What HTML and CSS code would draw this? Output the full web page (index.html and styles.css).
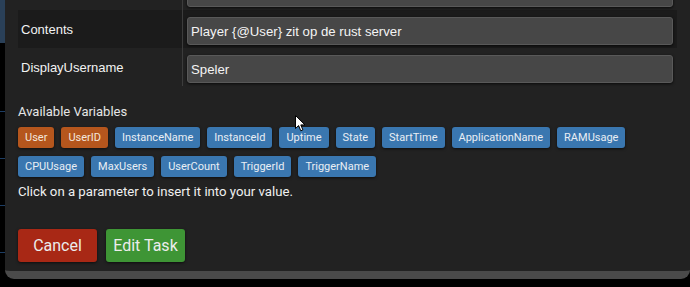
FILE: index.html
```html
<!DOCTYPE html>
<html lang="en">
<head>
  <meta charset="UTF-8">
  <title>Edit Task</title>
  <meta name="viewport" content="width=device-width, initial-scale=1.0">
  <link rel="stylesheet" href="styles.css">
</head>
<body>

<div class="screen">
  <div class="page-edge">
    <div class="edge-tab"></div>
    <div class="edge-line first"></div>
    <div class="edge-line"></div>
    <div class="edge-line"></div>
    <div class="edge-line"></div>
  </div>

  <div class="modal">
    <div class="fields">
      <!-- row scrolled mostly out of view -->
      <div class="field-row">
        <div class="field-label"></div>
        <div class="field-value"><div class="field-input"></div></div>
      </div>
      <div class="field-row active">
        <div class="field-label">Contents</div>
        <div class="field-value"><div class="field-input">Player {@User} zit op de rust server</div></div>
      </div>
      <div class="field-row">
        <div class="field-label">DisplayUsername</div>
        <div class="field-value"><div class="field-input">Speler</div></div>
      </div>
    </div>

    <div class="variables">
      <div class="variables-title">Available Variables</div>
      <div class="chips">
        <span class="chip chip-user">User</span>
        <span class="chip chip-user">UserID</span>
        <span class="chip">InstanceName</span>
        <span class="chip">InstanceId</span>
        <span class="chip">Uptime</span>
        <span class="chip">State</span>
        <span class="chip">StartTime</span>
        <span class="chip">ApplicationName</span>
        <span class="chip">RAMUsage</span>
        <span class="chip">CPUUsage</span>
        <span class="chip">MaxUsers</span>
        <span class="chip">UserCount</span>
        <span class="chip">TriggerId</span>
        <span class="chip">TriggerName</span>
      </div>
      <p class="hint">Click on a parameter to insert it into your value.</p>
    </div>

    <div class="actions">
      <button class="btn btn-cancel">Cancel</button>
      <button class="btn btn-edit">Edit Task</button>
    </div>
  </div>
</div>

<!-- mouse pointer -->
<svg class="cursor" width="11" height="17" viewBox="0 0 11 17">
  <path d="M0.5 0.5 L0.5 13.5 L3.6 10.6 L5.8 15.8 L7.9 14.9 L5.8 9.9 L10 9.9 Z" fill="#fff" stroke="#000" stroke-width="1"/>
</svg>

</body>
</html>
```

FILE: styles.css
```css
* {
  box-sizing: border-box;
}

body {
  margin: 0;
  background: #000;
  overflow: hidden;
  font-family: Roboto, "Liberation Sans", sans-serif;
  color: #eee;
}

.screen {
  display: flex;
  height: 287px;
  align-items: flex-start;
}

/* page behind the dialog */
.page-edge {
  width: 5px;
  flex-shrink: 0;
  display: flex;
  flex-direction: column;
}

.edge-tab {
  height: 43px;
  background: #2a4058;
}

.edge-line {
  height: 1px;
  margin-top: 46px;
  background: #1d3d63;
}

.edge-line.first {
  margin-top: 68px;
}

.modal {
  flex: 1;
  background: #222;
  padding: 0 13px 9px 13px;
  border-bottom: 8px solid #4a4a4a;
  border-radius: 0 0 9px 9px;
}

.fields {
  margin-top: -28px;
}

.field-row {
  display: grid;
  grid-template-columns: 165px 1fr;
  height: 38px;
}

.field-row.active {
  background: #1b1b1b;
}

.field-label {
  border-right: 1px solid #3c3c3c;
  padding-left: 3px;
  display: flex;
  align-items: center;
  font-family: "Liberation Sans", Arial, sans-serif;
  font-size: 13px;
  color: #f2f2f2;
}

.field-value {
  padding: 7px 4px 3px 4px;
}

.field-input {
  height: 28px;
  background: #474747;
  border: 1px solid #595959;
  border-radius: 3px;
  box-shadow: 0 1px 3px rgba(0, 0, 0, 0.7);
  padding-left: 3px;
  display: flex;
  align-items: center;
  font-family: "Liberation Sans", Arial, sans-serif;
  font-size: 13.2px;
  color: #f4f4f4;
}

.variables-title {
  margin-top: 18px;
  font-size: 13px;
  line-height: 16px;
  color: #e6e6e6;
}

.chips {
  display: flex;
  flex-wrap: wrap;
  gap: 8px 7px;
  margin-top: 7px;
  max-width: 640px;
}

.chip {
  height: 21px;
  line-height: 21px;
  padding: 0 7px;
  font-size: 11px;
  color: #e9eef4;
  background: #3a77b0;
  border-radius: 3px;
  box-shadow: 0 1px 3px rgba(0, 0, 0, 0.6);
}

.chip-user {
  background: #b5561d;
  color: #f3e6dc;
}

.hint {
  margin: 7px 0 0;
  font-size: 13.2px;
  line-height: 16px;
  color: #f0f0f0;
}

.actions {
  display: flex;
  gap: 9px;
  margin-top: 29px;
}

.btn {
  width: 79px;
  height: 33px;
  border: none;
  border-radius: 3px;
  font-family: Roboto, sans-serif;
  font-size: 16px;
  color: #ececec;
  box-shadow: 0 1px 3px rgba(0, 0, 0, 0.6);
  cursor: pointer;
}

.btn-cancel {
  background: #a82815;
}

.btn-edit {
  background: #3e9535;
}

.cursor {
  position: absolute;
  left: 295px;
  top: 115px;
}
```
